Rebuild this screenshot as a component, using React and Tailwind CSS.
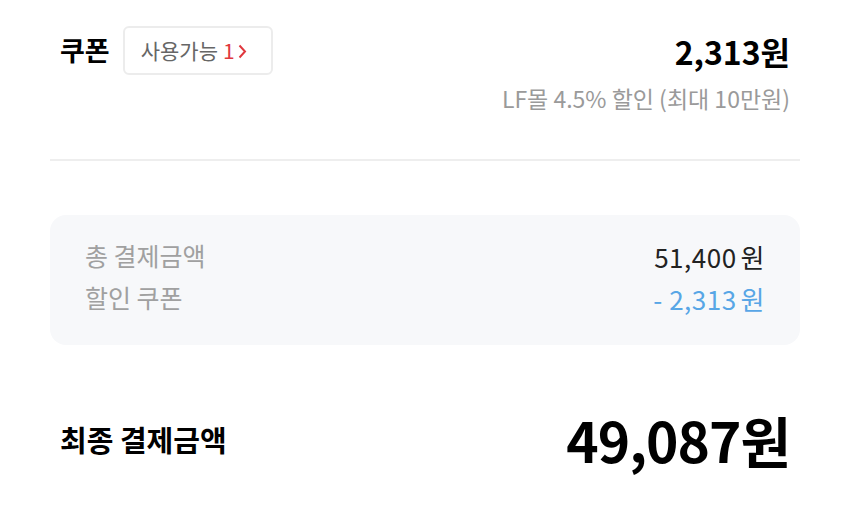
export default function App() {
  return (
    <div
      className="w-[850px] h-[510px] bg-white overflow-hidden"
      style={{ fontFamily: '"Noto Sans CJK KR", "Noto Sans", sans-serif' }}
    >
      {/* Coupon */}
      <div className="pl-[60px] pr-[60px] pt-[26px]">
        <div className="flex items-center justify-between h-[49px]">
          <div className="flex items-center gap-[13px]">
            <span className="text-[27px] font-bold text-black">쿠폰</span>
            <button className="h-[49px] pl-[16px] pr-[24px] rounded-[6px] border-2 border-[#ececec] flex items-center text-[21px] text-[#666]">
              사용가능
              <span className="ml-[5px] text-[#e0383e]">1</span>
              <svg width="9" height="15" viewBox="0 0 9 15" className="ml-[3px] mt-[1px]">
                <path d="M1.5 1.5 L7 7.5 L1.5 13.5" fill="none" stroke="#e0383e" strokeWidth="2" />
              </svg>
            </button>
          </div>
          <span className="text-[32px] font-bold text-black leading-none">2,313원</span>
        </div>
        <p className="text-right text-[23px] leading-[28px] text-[#9a9a9a] mt-[9px]">LF몰 4.5% 할인 (최대 10만원)</p>
      </div>

      <div className="mx-[50px] mt-[47px] h-[2px] bg-[#eeeeee]" />

      {/* Summary box */}
      <div className="mx-[50px] mt-[54px] h-[130px] rounded-[16px] bg-[#f7f8fa] px-[35px] pt-[23px]">
        <div className="flex items-center justify-between h-[36px]">
          <span className="text-[25px] text-[#a0a0a0]">총 결제금액</span>
          <span className="text-[26px] text-[#222] tracking-[0.5px]">51,400<span className="ml-[4px]">원</span></span>
        </div>
        <div className="flex items-center justify-between h-[36px] mt-[6px]">
          <span className="text-[25px] text-[#a0a0a0]">할인 쿠폰</span>
          <span className="text-[26px] text-[#58a6e6] tracking-[0.5px]">- 2,313<span className="ml-[4px]">원</span></span>
        </div>
      </div>

      {/* Final */}
      <div className="flex items-center justify-between pl-[60px] pr-[60px] mt-[67px] h-[55px]">
        <span className="text-[29px] font-bold text-black">최종 결제금액</span>
        <span className="text-[55px] font-bold text-black tracking-[-1px] leading-none">49,087원</span>
      </div>
    </div>
  );
}
